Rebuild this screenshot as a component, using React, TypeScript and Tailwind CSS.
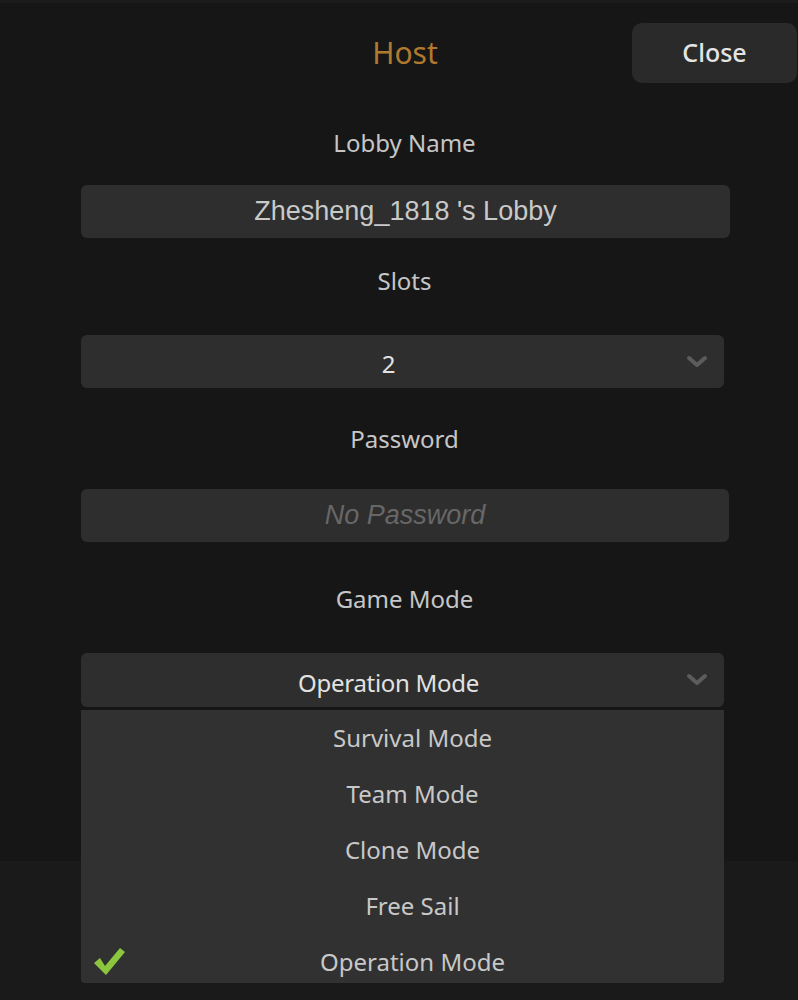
import React from "react";

const ui = { fontFamily: '"Noto Sans", "DejaVu Sans", sans-serif' };
const field = { fontFamily: '"Liberation Sans", Arial, sans-serif' };

const modes = ["Survival Mode", "Team Mode", "Clone Mode", "Free Sail", "Operation Mode"];
const selected = "Operation Mode";

function Chevron() {
  return (
    <svg width="22" height="14" viewBox="0 0 22 14" className="absolute right-[16px] top-1/2 -translate-y-1/2" aria-hidden>
      <polyline points="3,3 11,10 19,3" fill="none" stroke="#5c5c5c" strokeWidth="4" strokeLinecap="round" strokeLinejoin="round" />
    </svg>
  );
}

function Check() {
  return (
    <svg width="34" height="30" viewBox="0 0 34 30" aria-hidden>
      <path d="M2 17 L8 12 L13 20 L28 2 L33 6 L14 29 Z" fill="#8cc63f" />
    </svg>
  );
}

function Label({ children, className }: { children: React.ReactNode; className: string }) {
  return (
    <p className={`h-[30px] pl-[11px] text-center text-[24px] leading-[30px] text-[#c6c6c6] ${className}`} style={ui}>
      {children}
    </p>
  );
}

export default function App() {
  return (
    <div className="min-h-[1000px] w-[798px] overflow-hidden border-t-[3px] border-[#1c1c1c] bg-[linear-gradient(to_bottom,#161616_858px,#1a1a1a_858px)]">
      <header className="mt-[20px] grid h-[60px] grid-cols-[1fr_auto_1fr] items-center">
        <div />
        <h1 className="pl-[12px] text-[30px] leading-none text-[#b07a2e]" style={ui}>
          Host
        </h1>
        <div className="flex justify-end pr-[1px]">
          <button className="h-[60px] w-[165px] rounded-[10px] bg-[#2a2a2a] text-[25px] font-medium text-[#e4e4e4]" style={ui}>
            Close
          </button>
        </div>
      </header>

      <main className="px-[81px]">
        <Label className="mt-[45px]">Lobby Name</Label>
        <div
          className="mt-[27px] flex h-[53px] w-[649px] items-center justify-center rounded-[6px] bg-[#2e2e2e] text-[27px] text-[#c9c9c9]"
          style={field}
        >
          Zhesheng_1818 's Lobby
        </div>

        <Label className="mt-[28px]">Slots</Label>
        <div
          className="relative mt-[39px] flex h-[53px] w-[643px] items-center justify-center rounded-[6px] bg-[#2e2e2e] pr-[28px] pt-[5px] text-[24px] tracking-[-0.3px] text-[#e2e2e2]"
          style={ui}
        >
          2
          <Chevron />
        </div>

        <Label className="mt-[36px]">Password</Label>
        <div
          className="mt-[35px] flex h-[53px] w-[648px] items-center justify-center rounded-[6px] bg-[#2e2e2e] text-[27px] italic text-[#676767]"
          style={field}
        >
          No Password
        </div>

        <Label className="mt-[42px]">Game Mode</Label>
        <div
          className="relative mt-[39px] flex h-[54px] w-[643px] items-center justify-center rounded-[6px] bg-[#2e2e2e] pr-[28px] pt-[5px] text-[24px] tracking-[-0.3px] text-[#e2e2e2]"
          style={ui}
        >
          Operation Mode
          <Chevron />
        </div>

        <ul className="mt-[3px] h-[273px] w-[643px] overflow-hidden rounded-b-[4px] bg-[#313131]" style={ui}>
          {modes.map((m) => (
            <li key={m} className="relative flex h-[56px] items-center justify-center pl-[20px] text-[24px] text-[#c8c8c8]">
              {m === selected && (
                <span className="absolute left-[11px] top-[12px]">
                  <Check />
                </span>
              )}
              {m}
            </li>
          ))}
        </ul>
      </main>
    </div>
  );
}
